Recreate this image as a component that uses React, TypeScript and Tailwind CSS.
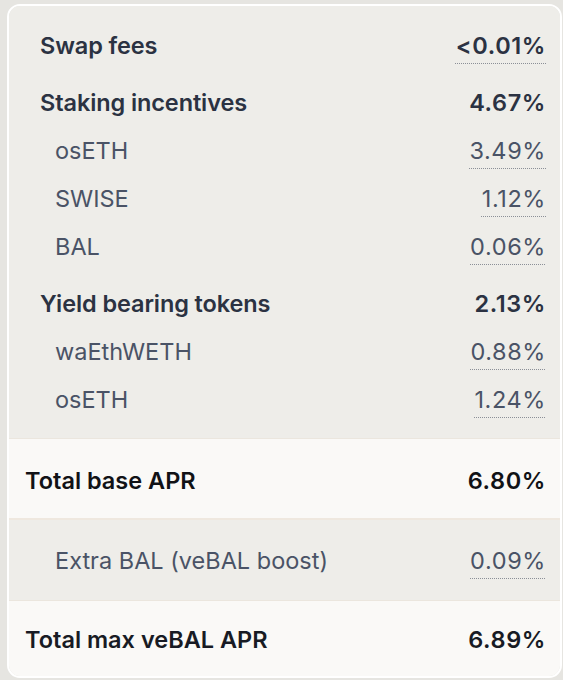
const top = [
  { label: 'Swap fees', value: '<0.01%', dotted: true, items: [] },
  {
    label: 'Staking incentives',
    value: '4.67%',
    dotted: false,
    items: [
      { label: 'osETH', value: '3.49%' },
      { label: 'SWISE', value: '1.12%' },
      { label: 'BAL', value: '0.06%' },
    ],
  },
  {
    label: 'Yield bearing tokens',
    value: '2.13%',
    dotted: false,
    items: [
      { label: 'waEthWETH', value: '0.88%' },
      { label: 'osETH', value: '1.24%' },
    ],
  },
];

function Value({ value, dotted, className }: { value: string; dotted?: boolean; className: string }) {
  return (
    <span
      className={`${className} text-[23.5px] tracking-[0.6px] ${
        dotted ? 'underline decoration-dotted decoration-[#8b8f97] decoration-1 underline-offset-[9px]' : ''
      }`}
    >
      {value}
    </span>
  );
}

export default function App() {
  return (
    <div
      className="min-h-[680px] bg-[#e6e5e1] pl-[7px] pt-[4px]"
      style={{ fontFamily: 'Inter, "Noto Sans", sans-serif' }}
    >
      <div className="w-[555px] overflow-hidden rounded-[13px] border-2 border-white">
        {/* Breakdown */}
        <div className="bg-[#eeede9] pt-[16px] pb-[14px] pr-[14px]">
          {top.map((group, i) => (
            <div key={group.label} className={i > 0 ? 'mt-[9px]' : ''}>
              <div className="flex h-12 items-center justify-between pl-[31px]">
                <span className="text-[23.5px] font-semibold tracking-[-0.1px] text-[#2b3242]">{group.label}</span>
                <Value value={group.value} dotted={group.dotted} className="font-semibold text-[#2b3242]" />
              </div>
              {group.items.map((item) => (
                <div key={item.label + item.value} className="flex h-12 items-center justify-between pl-[46px]">
                  <span className="text-[23.5px] text-[#4a5366]">{item.label}</span>
                  <Value value={item.value} dotted className="text-[#4a5366]" />
                </div>
              ))}
            </div>
          ))}
        </div>

        {/* Total base */}
        <div className="flex h-[80px] items-center justify-between border-t border-[#ebe6de] bg-[#faf9f7] pt-[4px] pl-[16px] pr-[14px]">
          <span className="text-[23.5px] font-semibold text-[#111216]">Total base APR</span>
          <Value value="6.80%" className="font-semibold text-[#111216]" />
        </div>

        {/* Boost */}
        <div className="flex h-[82px] items-center justify-between border-t-2 border-[#efe8df] bg-[#eeede9] pt-[2px] pl-[46px] pr-[14px]">
          <span className="text-[23.5px] text-[#4a5366]">Extra BAL (veBAL boost)</span>
          <Value value="0.09%" dotted className="text-[#4a5366]" />
        </div>

        {/* Total max */}
        <div className="flex h-[76px] items-center justify-between border-t border-[#ebe6de] bg-[#faf9f7] pt-[2px] pl-[16px] pr-[14px]">
          <span className="text-[23.5px] font-semibold text-[#181b24]">Total max veBAL APR</span>
          <Value value="6.89%" className="font-semibold text-[#181b24]" />
        </div>
      </div>
    </div>
  );
}
